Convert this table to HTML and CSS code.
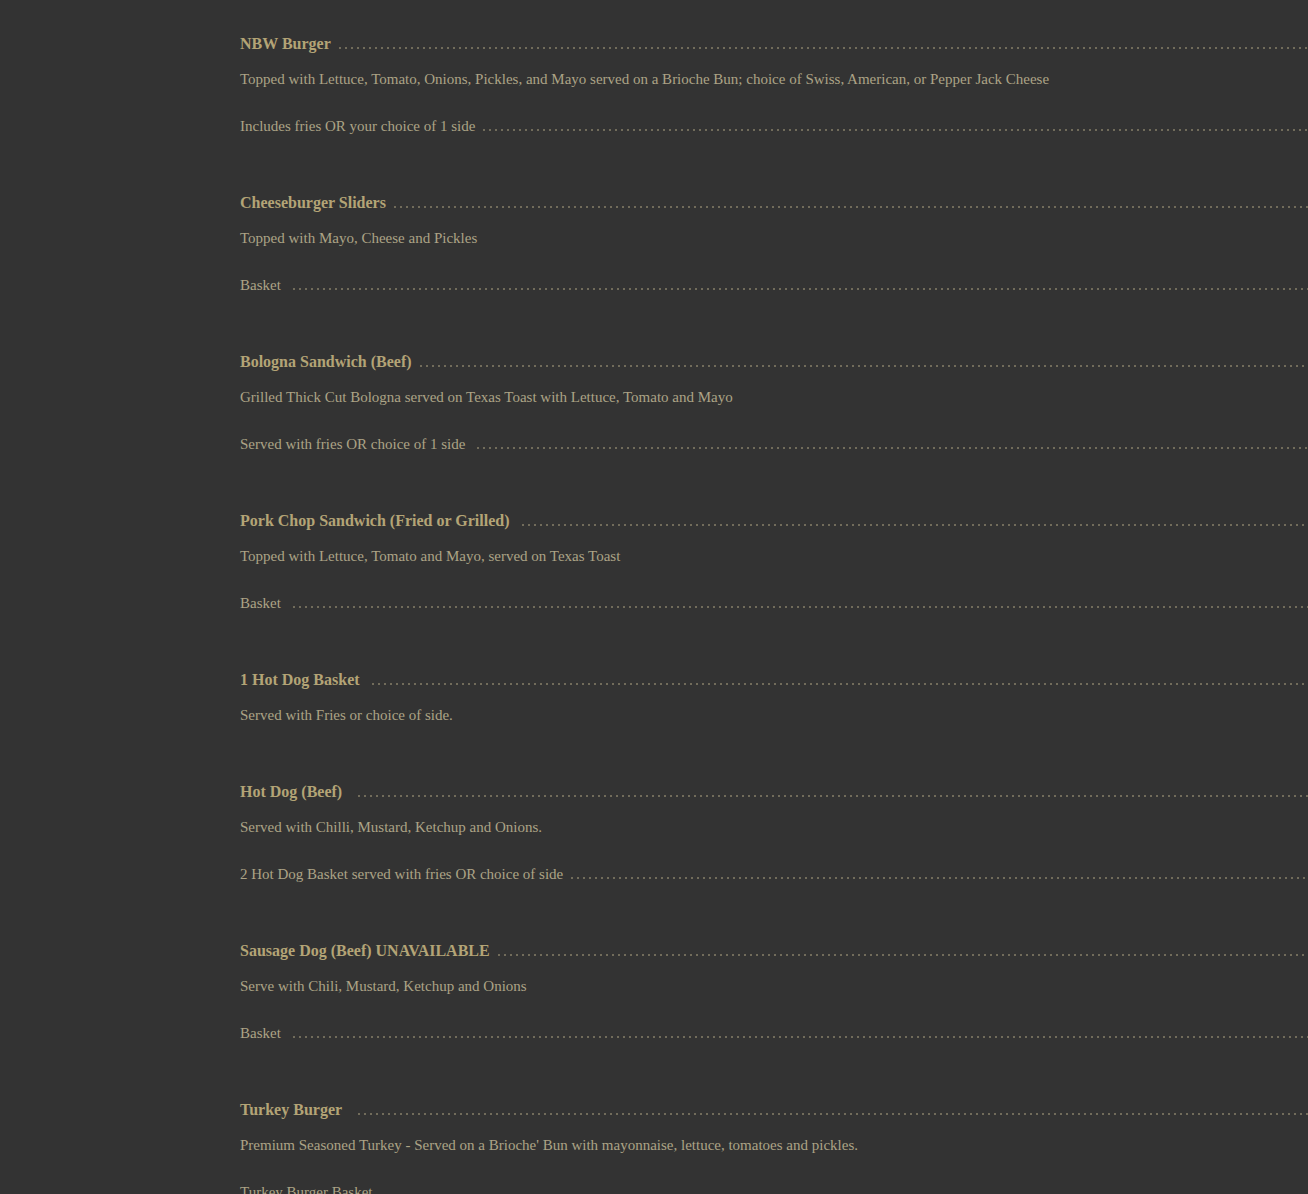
FILE: index.html
```html
<!DOCTYPE html>
<html lang="en">
<head>
<meta charset="utf-8">
<title>Menu</title>
<link rel="stylesheet" href="styles.css">
</head>
<body>
<div class="menu">
  <div class="item">
    <div class="row title-row"><span class="name">NBW Burger</span><span class="leader"></span></div>
    <p class="desc">Topped with Lettuce, Tomato, Onions, Pickles, and Mayo served on a Brioche Bun; choice of Swiss, American, or Pepper Jack Cheese</p>
    <div class="row sub-row"><span class="sub">Includes fries OR your choice of 1 side</span><span class="leader"></span></div>
  </div>
  <div class="item">
    <div class="row title-row"><span class="name">Cheeseburger Sliders</span><span class="leader"></span></div>
    <p class="desc">Topped with Mayo, Cheese and Pickles</p>
    <div class="row sub-row"><span class="sub">Basket&nbsp;</span><span class="leader"></span></div>
  </div>
  <div class="item">
    <div class="row title-row"><span class="name">Bologna Sandwich (Beef)</span><span class="leader"></span></div>
    <p class="desc">Grilled Thick Cut Bologna served on Texas Toast with Lettuce, Tomato and Mayo</p>
    <div class="row sub-row"><span class="sub">Served with fries OR choice of 1 side&nbsp;</span><span class="leader"></span></div>
  </div>
  <div class="item">
    <div class="row title-row"><span class="name">Pork Chop Sandwich (Fried or Grilled)&nbsp;</span><span class="leader"></span></div>
    <p class="desc">Topped with Lettuce, Tomato and Mayo, served on Texas Toast</p>
    <div class="row sub-row"><span class="sub">Basket&nbsp;</span><span class="leader"></span></div>
  </div>
  <div class="item">
    <div class="row title-row"><span class="name">1 Hot Dog Basket&nbsp;</span><span class="leader"></span></div>
    <p class="desc">Served with Fries or choice of side.</p>
  </div>
  <div class="item">
    <div class="row title-row"><span class="name">Hot Dog (Beef)&nbsp;&nbsp;</span><span class="leader"></span></div>
    <p class="desc">Served with Chilli, Mustard, Ketchup and Onions.</p>
    <div class="row sub-row"><span class="sub">2 Hot Dog Basket served with fries OR choice of side</span><span class="leader"></span></div>
  </div>
  <div class="item">
    <div class="row title-row"><span class="name">Sausage Dog (Beef) UNAVAILABLE</span><span class="leader"></span></div>
    <p class="desc">Serve with Chili, Mustard, Ketchup and Onions</p>
    <div class="row sub-row"><span class="sub">Basket&nbsp;</span><span class="leader"></span></div>
  </div>
  <div class="item">
    <div class="row title-row"><span class="name">Turkey Burger&nbsp;&nbsp;</span><span class="leader"></span></div>
    <p class="desc">Premium Seasoned Turkey - Served on a Brioche' Bun with mayonnaise, lettuce, tomatoes and pickles.</p>
    <div class="row sub-row"><span class="sub">Turkey Burger Basket</span><span class="leader"></span></div>
  </div>
</div>
</body>
</html>
```
FILE: styles.css
```css
html, body {
  margin: 0;
  padding: 0;
  overflow: hidden;
  background: #333333;
}
body {
  font-family: "Liberation Serif", "Times New Roman", serif;
  color: #aca386;
}
.menu {
  margin-left: 240px;
  width: 1400px;
  padding-top: 33px;
  display: flex;
  flex-direction: column;
  gap: 55px;
}
.item {
  display: flex;
  flex-direction: column;
}
.row {
  display: flex;
  align-items: flex-end;
  line-height: 22px;
}
.name {
  font-size: 16px;
  font-weight: bold;
  color: #b3a476;
  white-space: nowrap;
}
.sub {
  font-size: 15px;
  color: #aca386;
  white-space: nowrap;
}
.leader {
  flex: 1;
  height: 2px;
  margin: 0 0 6px 6px;
  background-image: radial-gradient(circle, rgba(155, 146, 118, 0.6) 0.9px, transparent 1.2px);
  background-size: 6px 2px;
  background-repeat: repeat-x;
}
.desc {
  margin: 13px 0 0 0;
  font-size: 15px;
  line-height: 22px;
  color: #aca386;
}
.sub-row {
  margin-top: 25px;
}
```
